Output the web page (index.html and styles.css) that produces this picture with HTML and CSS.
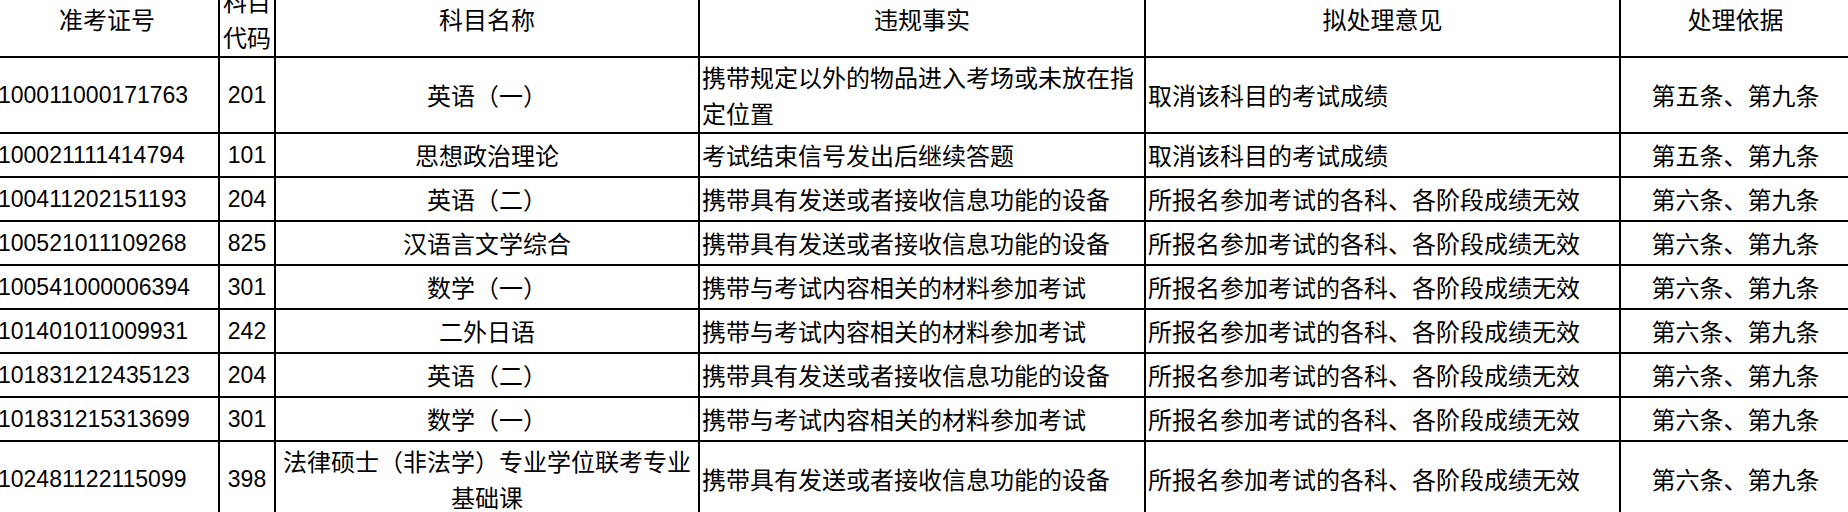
FILE: index.html
```html
<!DOCTYPE html>
<html lang="zh-CN">
<head>
<meta charset="utf-8">
<title>违规处理</title>
<link rel="stylesheet" href="styles.css">
</head>
<body>
<table class="sheet">
  <colgroup>
    <col class="c-id">
    <col class="c-code">
    <col class="c-name">
    <col class="c-fact">
    <col class="c-opinion">
    <col class="c-basis">
  </colgroup>
  <thead>
    <tr class="tall">
      <th>准考证号</th>
      <th>科目<br>代码</th>
      <th>科目名称</th>
      <th>违规事实</th>
      <th>拟处理意见</th>
      <th>处理依据</th>
    </tr>
  </thead>
  <tbody>
    <tr class="tall">
      <td class="num left">100011000171763</td>
      <td class="num">201</td>
      <td>英语（一）</td>
      <td class="left">携带规定以外的物品进入考场或未放在指定位置</td>
      <td class="left">取消该科目的考试成绩</td>
      <td>第五条、第九条</td>
    </tr>
    <tr>
      <td class="num left">100021111414794</td>
      <td class="num">101</td>
      <td>思想政治理论</td>
      <td class="left">考试结束信号发出后继续答题</td>
      <td class="left">取消该科目的考试成绩</td>
      <td>第五条、第九条</td>
    </tr>
    <tr>
      <td class="num left">100411202151193</td>
      <td class="num">204</td>
      <td>英语（二）</td>
      <td class="left">携带具有发送或者接收信息功能的设备</td>
      <td class="left">所报名参加考试的各科、各阶段成绩无效</td>
      <td>第六条、第九条</td>
    </tr>
    <tr>
      <td class="num left">100521011109268</td>
      <td class="num">825</td>
      <td>汉语言文学综合</td>
      <td class="left">携带具有发送或者接收信息功能的设备</td>
      <td class="left">所报名参加考试的各科、各阶段成绩无效</td>
      <td>第六条、第九条</td>
    </tr>
    <tr>
      <td class="num left">100541000006394</td>
      <td class="num">301</td>
      <td>数学（一）</td>
      <td class="left">携带与考试内容相关的材料参加考试</td>
      <td class="left">所报名参加考试的各科、各阶段成绩无效</td>
      <td>第六条、第九条</td>
    </tr>
    <tr>
      <td class="num left">101401011009931</td>
      <td class="num">242</td>
      <td>二外日语</td>
      <td class="left">携带与考试内容相关的材料参加考试</td>
      <td class="left">所报名参加考试的各科、各阶段成绩无效</td>
      <td>第六条、第九条</td>
    </tr>
    <tr>
      <td class="num left">101831212435123</td>
      <td class="num">204</td>
      <td>英语（二）</td>
      <td class="left">携带具有发送或者接收信息功能的设备</td>
      <td class="left">所报名参加考试的各科、各阶段成绩无效</td>
      <td>第六条、第九条</td>
    </tr>
    <tr>
      <td class="num left">101831215313699</td>
      <td class="num">301</td>
      <td>数学（一）</td>
      <td class="left">携带与考试内容相关的材料参加考试</td>
      <td class="left">所报名参加考试的各科、各阶段成绩无效</td>
      <td>第六条、第九条</td>
    </tr>
    <tr class="tall">
      <td class="num left">102481122115099</td>
      <td class="num">398</td>
      <td>法律硕士（非法学）专业学位联考专业基础课</td>
      <td class="left">携带具有发送或者接收信息功能的设备</td>
      <td class="left">所报名参加考试的各科、各阶段成绩无效</td>
      <td>第六条、第九条</td>
    </tr>
  </tbody>
</table>
</body>
</html>
```
FILE: styles.css
```css
html, body {
  margin: 0;
  padding: 0;
  background: #ffffff;
  overflow: hidden;
}

body {
  width: 1848px;
  height: 512px;
}

.sheet {
  border-collapse: collapse;
  table-layout: fixed;
  width: 1856px;
  margin: -20px 0 0 -6px;
  font-family: "Noto Sans CJK SC", "Liberation Sans", sans-serif;
  font-size: 24px;
  line-height: 36px;
  color: #000000;
}

.c-id { width: 224px; }
.c-code { width: 56px; }
.c-name { width: 424px; }
.c-fact { width: 446px; }
.c-opinion { width: 475px; }
.c-basis { width: 231px; }

.sheet th,
.sheet td {
  border: 2px solid #000000;
  padding: 1px 2px;
  text-align: center;
  vertical-align: middle;
  font-weight: normal;
  overflow: hidden;
}

.sheet tr {
  height: 44px;
}

.sheet tr.tall {
  height: 76px;
}

.sheet td.left {
  text-align: left;
}

.sheet td.num {
  font-family: "Liberation Sans", "Noto Sans CJK SC", sans-serif;
  font-size: 23px;
}
```
